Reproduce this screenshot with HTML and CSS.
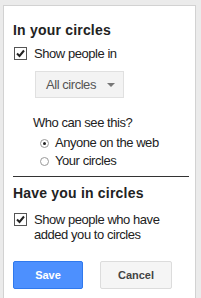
FILE: index.html
```html
<html lang="en">
    <head>
        <meta charset="utf-8"/>
        <title>Circles settings</title>
        <link rel="stylesheet" href="styles.css">
    </head>
    <body>
        <div class="panel">
            <h3 class="title">In your circles</h3>
            <div class="check-row">
                <span class="box">
                    <svg width="9" height="9" viewBox="0 0 9 9"><path d="M1 4.5 L3.5 7 L8 1.5" fill="none" stroke="#222" stroke-width="2"/></svg>
                </span>
                <span>Show people in</span>
            </div>
            <div class="select">
                <span>All circles</span>
                <span class="arrow"></span>
            </div>
            <div class="who">
                <div class="question">Who can see this?</div>
                <div class="radio-row first"><span class="radio on"></span>Anyone on the web</div>
                <div class="radio-row"><span class="radio"></span>Your circles</div>
            </div>
            <div class="line"></div>
            <h3 class="title">Have you in circles</h3>
            <div class="check-row two">
                <span class="box">
                    <svg width="9" height="9" viewBox="0 0 9 9"><path d="M1 4.5 L3.5 7 L8 1.5" fill="none" stroke="#222" stroke-width="2"/></svg>
                </span>
                <span>Show people who have<br/>added you to circles</span>
            </div>
            <div class="buttons">
                <button class="btn save">Save</button>
                <button class="btn cancel">Cancel</button>
            </div>
        </div>
    </body>
</html>
```
FILE: styles.css
```css
body { margin: 0; background-color: #ebebeb; font-family: Arial, "Liberation Sans", sans-serif; font-size: 13px; letter-spacing: -0.45px; color: #222; }
.panel {
    margin: 5px 5px 0 3px; height: 293px; box-sizing: border-box;
    background-color: #fff; border: 1px solid #d2d2d2; border-bottom: none;
    padding: 15px 9px 0 9px;
}
.title { margin: 0; font-size: 14px; font-weight: bold; letter-spacing: 0.2px; line-height: 18px; }
.check-row { display: flex; align-items: flex-start; margin-top: 7px; line-height: 16px; }
.box {
    width: 11px; height: 11px; border: 1px solid #555; margin: 1px 7px 0 1px;
    display: flex; align-items: center; justify-content: center; flex: none;
}
.select {
    margin: 9px 0 0 22px; width: 89px; height: 27px; box-sizing: border-box;
    border: 1px solid #e0e0e0; background-color: #f3f3f3; color: #555; white-space: nowrap;
    display: flex; align-items: center; padding-left: 10px;
}
.arrow {
    margin-left: 11px; width: 0; height: 0;
    border-left: 4px solid transparent; border-right: 4px solid transparent; border-top: 4px solid #777;
}
.who { margin: 16px 0 0 20px; line-height: 18px; }
.radio-row { display: flex; align-items: center; margin-left: 7px; }
.radio-row.first { margin-top: 2px; }
.radio {
    width: 7px; height: 7px; border: 1px solid #999; border-radius: 50%; margin-right: 6px;
    display: flex; align-items: center; justify-content: center; box-sizing: content-box;
}
.radio.on::after { content: ""; width: 3px; height: 3px; border-radius: 50%; background-color: #222; }
.line { margin: 6px -3px 7px 0; border-top: 1px solid #333; }
.check-row.two { margin-top: 10px; line-height: 15px; }
.buttons { margin-top: 19px; display: flex; gap: 17px; }
.btn {
    height: 28px; font-family: Arial, "Liberation Sans", sans-serif; font-size: 11px; font-weight: bold;
    border-radius: 2px; padding: 0; letter-spacing: 0;
}
.save { width: 70px; background-color: #4d90fe; border: 1px solid #3079ed; color: #fff; }
.cancel { width: 72px; background-color: #f5f5f5; border: 1px solid #dcdcdc; color: #444; }
```
